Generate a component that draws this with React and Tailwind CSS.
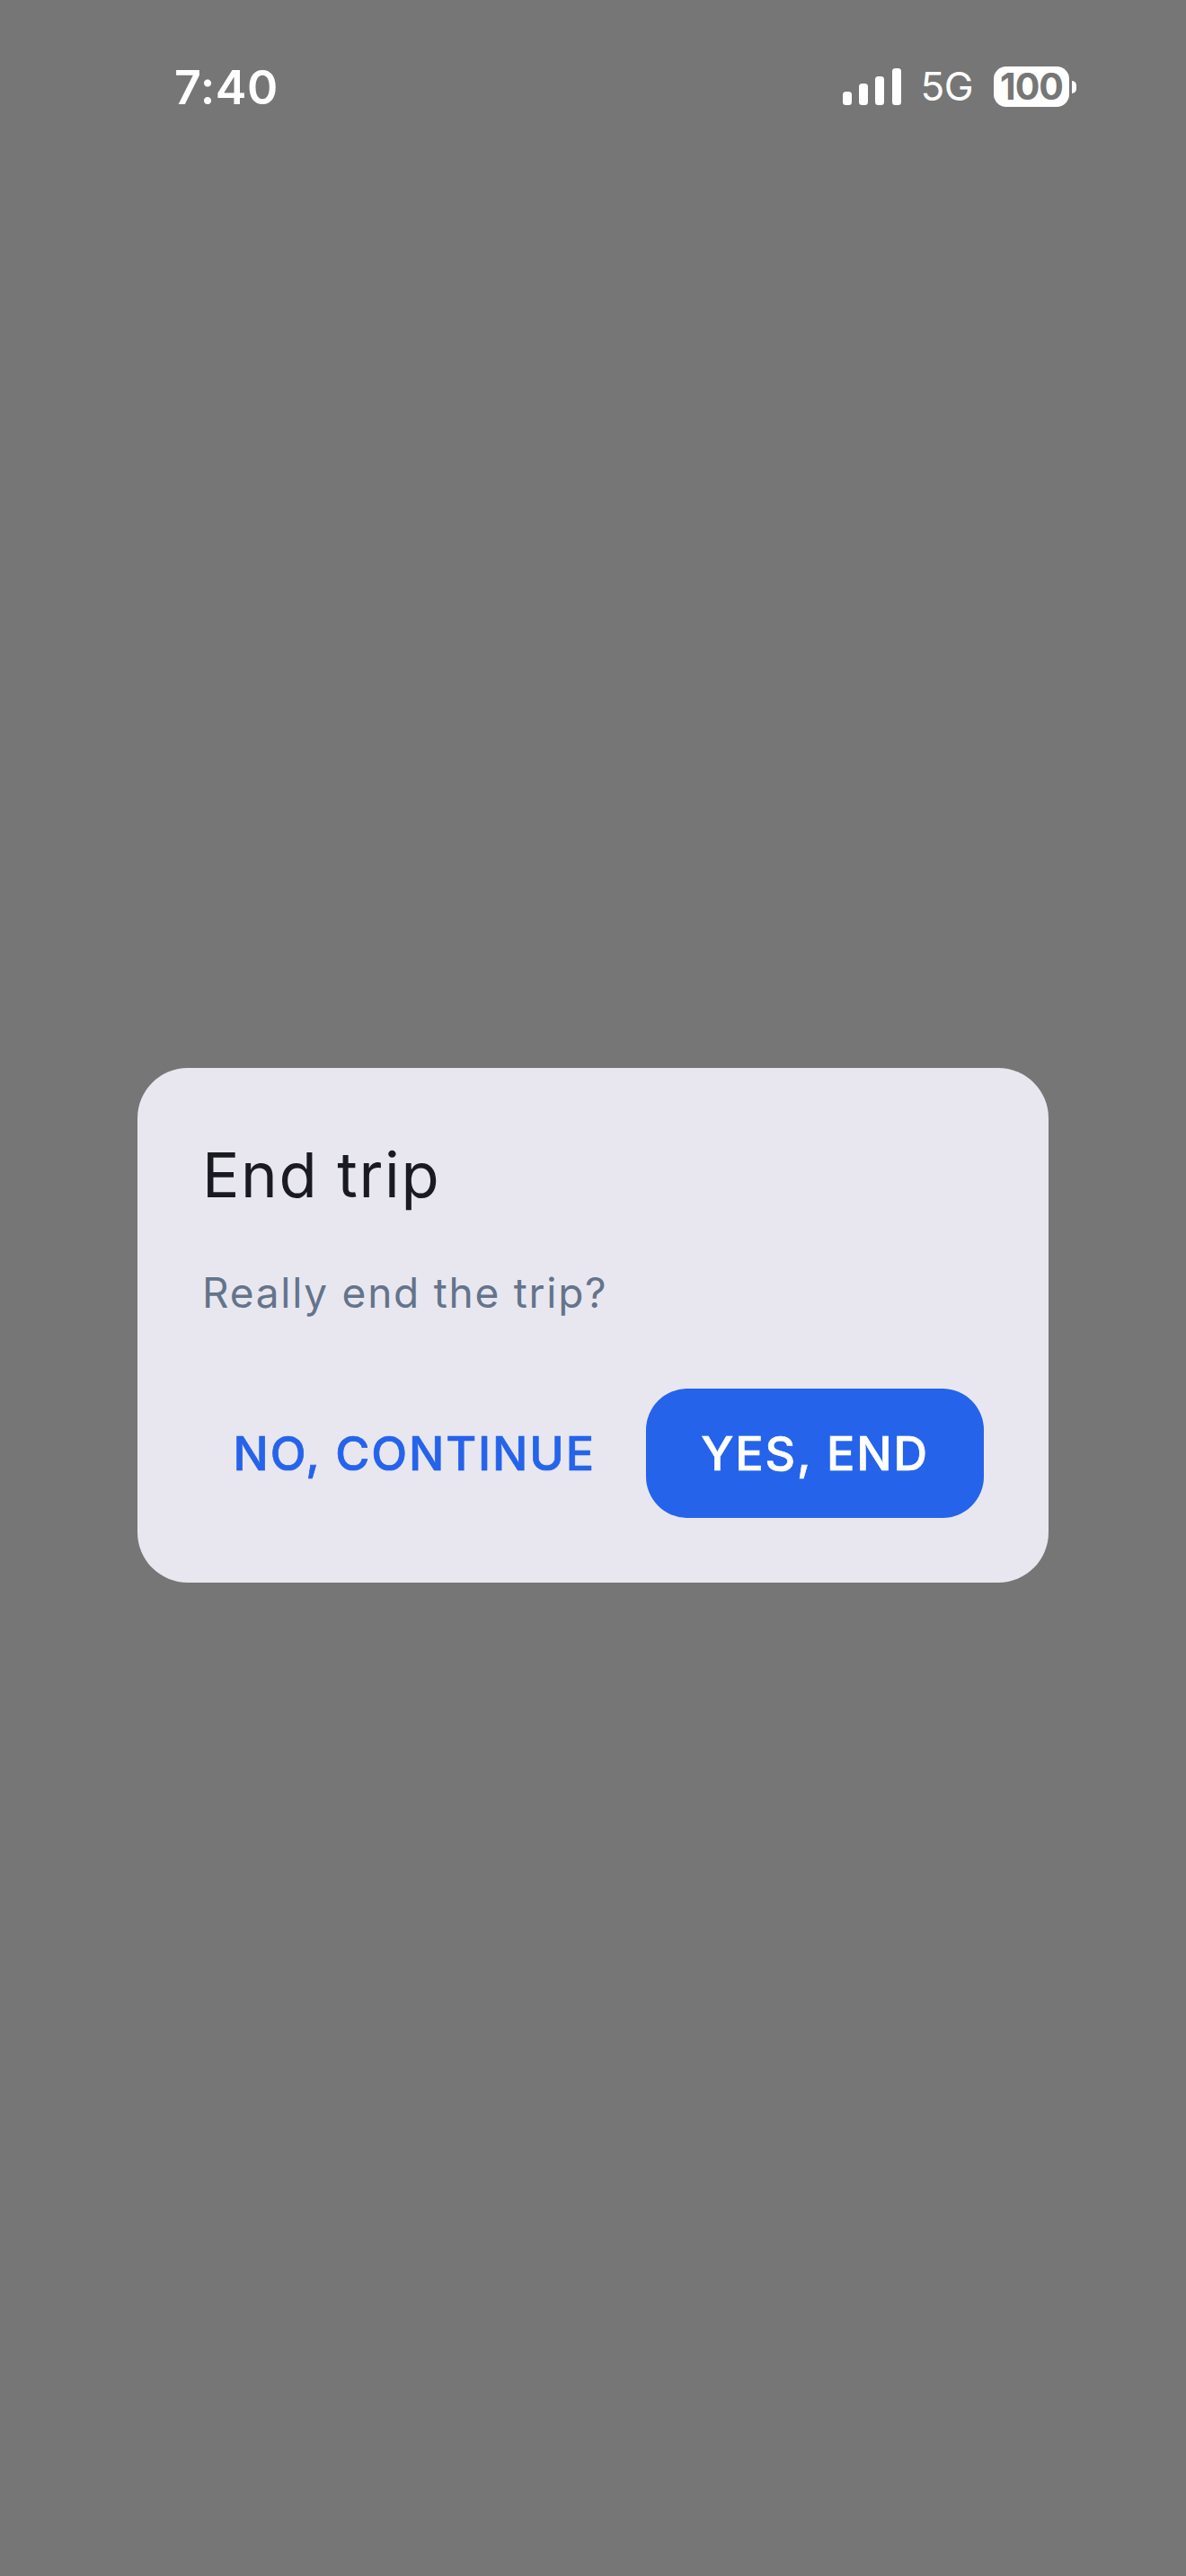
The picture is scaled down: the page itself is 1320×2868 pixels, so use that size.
import React from "react";

const SignalIcon = () => (
  <svg width="66" height="41" viewBox="0 0 66 41" fill="white">
    <rect x="0" y="26" width="10" height="15" rx="3.5" />
    <rect x="18" y="17" width="10" height="24" rx="3.5" />
    <rect x="36" y="9" width="10" height="32" rx="3.5" />
    <rect x="55" y="0" width="10" height="41" rx="3.5" />
  </svg>
);

const StatusBar = () => (
  <div className="flex h-[196px] items-start justify-between pl-[194px] pr-[122px] pt-[68px] text-white">
    <span className="text-[52px] font-semibold leading-[60px] tracking-[0.5px]">7:40</span>
    <div className="flex items-center pt-[6px]">
      <SignalIcon />
      <span className="ml-[20px] text-[44px] leading-[45px] tracking-[-0.5px]">5G</span>
      <div className="ml-[23px] flex h-[45px] w-[84px] items-center justify-center rounded-[14px] bg-white text-[41px] font-bold leading-none tracking-[-1px] text-[#767676]">
        100
      </div>
      <div className="ml-[3px] h-[14px] w-[5px] rounded-r-full bg-white" />
    </div>
  </div>
);

const App = () => {
  return (
    <div className="h-[2868px] w-[1320px] overflow-hidden bg-[#767676] font-['Inter',sans-serif]">
      <StatusBar />
      <div className="mx-[153px] mt-[993px] w-[1014px] rounded-[56px] bg-[#e8e7f0] p-[72px]">
        <h2 className="pt-[2px] text-[69px] font-normal leading-[90px] tracking-[1.6px] text-[#1a1b20]">End trip</h2>
        <p className="mt-[54px] text-[46px] leading-[64px] tracking-[1.75px] text-[#64748b]">
          Really end the trip?
        </p>
        <div className="mt-[75px] flex items-center justify-end gap-[24px]">
          <button className="h-[144px] shrink-0 whitespace-nowrap px-[32px] pt-[2px] text-[52px] font-medium tracking-[1.9px] text-[#2563eb] [-webkit-text-stroke:0.7px_#2563eb]">
            NO, CONTINUE
          </button>
          <button className="h-[144px] w-[376px] shrink-0 whitespace-nowrap rounded-[46px] bg-[#2563eb] pt-[2px] text-[52px] font-medium tracking-[1.9px] text-white [-webkit-text-stroke:0.7px_#ffffff]">
            YES, END
          </button>
        </div>
      </div>
    </div>
  );
};

export default App;
